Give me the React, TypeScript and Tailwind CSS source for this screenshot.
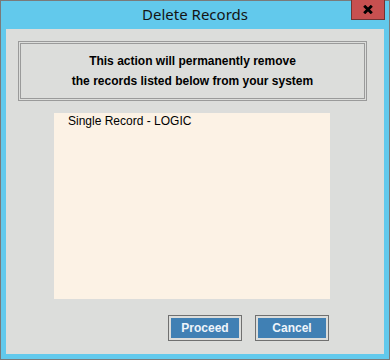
import React from "react";

function CloseGlyph() {
  return (
    <svg width="10" height="9" viewBox="0 0 10 9" aria-hidden="true">
      <path d="M1.2 0.8 L8.8 8.2 M8.8 0.8 L1.2 8.2" stroke="#000" strokeWidth="2.9" />
    </svg>
  );
}

function DialogButton({ label }: { label: string }) {
  return (
    <button className="w-[74px] h-[26px] border border-[#707070] bg-[#dcdddb] p-[2px]">
      <span className="flex h-full w-full items-center justify-center bg-[#4080b4] text-[12px] font-bold text-[#eef4fa] font-['Liberation_Sans',Arial,sans-serif]">
        {label}
      </span>
    </button>
  );
}

export default function App() {
  return (
    <div className="relative w-[390px] h-[360px] border border-[#7a7a7a] bg-[#62c9ec] flex flex-col">
      <div className="h-[28px] flex items-center justify-center pb-[1px]">
        <span className="text-[15px] text-[#141414] font-['Noto_Sans','Open_Sans',sans-serif]">
          Delete Records
        </span>
      </div>
      <button
        aria-label="Close"
        className="absolute top-[-1px] right-[4px] w-[34px] h-[20px] bg-[#c75050] border border-[#6e3535] border-t-0 flex items-center justify-center"
      >
        <CloseGlyph />
      </button>

      <div className="mx-[5px] mb-[5px] flex-1 bg-[#dcdddb] pt-[12px] pl-[12px] pr-[17px] flex flex-col font-['Liberation_Sans',Arial,sans-serif]">
        <div className="h-[60px] border-[3px] border-double border-[#9a9a9a] flex flex-col items-center justify-center text-[12px] font-bold leading-[20px] text-[#000]">
          <p>This action will permanently remove</p>
          <p>the records listed below from your system</p>
        </div>

        <div className="mt-[12px] ml-[36px] w-[276px] h-[186px] bg-[#fcf2e5] pt-[1px] pl-[14px] text-[12px] leading-[14px] text-[#000]">
          Single Record - LOGIC
        </div>

        <div className="mt-[16px] ml-[150px] flex gap-[13px]">
          <DialogButton label="Proceed" />
          <DialogButton label="Cancel" />
        </div>
      </div>
    </div>
  );
}
